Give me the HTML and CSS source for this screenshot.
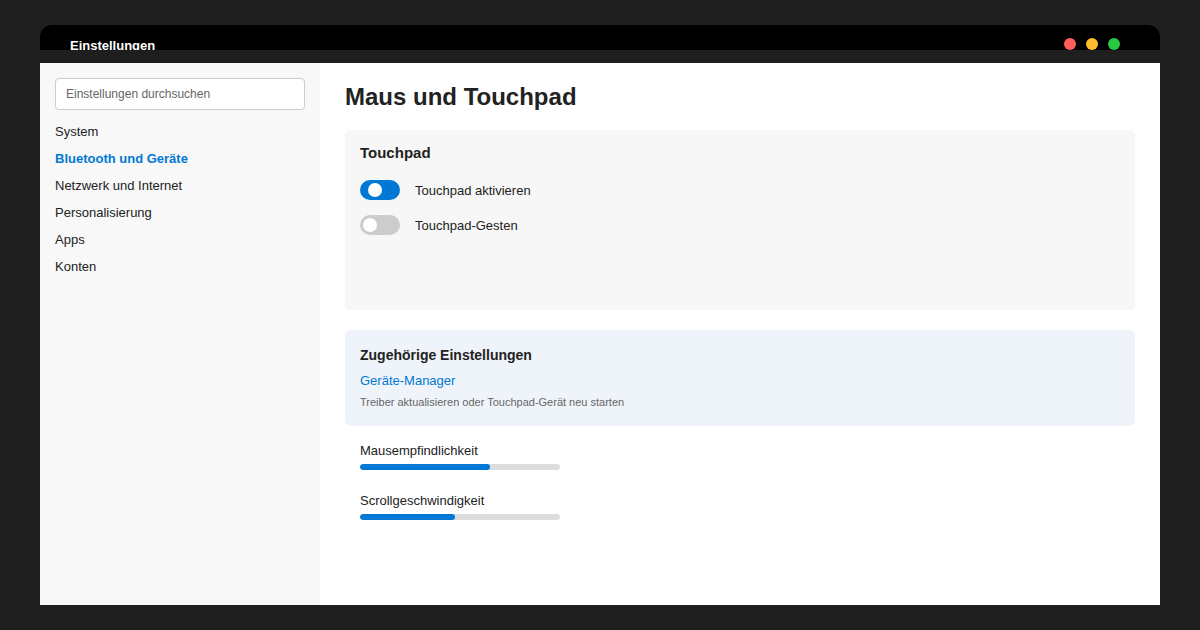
FILE: index.html
```html
<!DOCTYPE html>
<html lang="de">
<head>
    <meta charset="UTF-8">
    <meta name="viewport" content="width=device-width, initial-scale=1.0">
    <title>Einstellungen</title>
    <link rel="stylesheet" href="styles.css">
</head>
<body>
    <div class="window">
        <div class="titlebar">
            <span class="title">Einstellungen</span>
            <div class="dots">
                <span class="dot red"></span>
                <span class="dot yellow"></span>
                <span class="dot green"></span>
            </div>
        </div>

        <div class="body">
            <aside class="sidebar">
                <input class="search" type="text" placeholder="Einstellungen durchsuchen">
                <nav class="nav">
                    <a>System</a>
                    <a class="active">Bluetooth und Geräte</a>
                    <a>Netzwerk und Internet</a>
                    <a>Personalisierung</a>
                    <a>Apps</a>
                    <a>Konten</a>
                </nav>
            </aside>

            <main class="content">
                <h1>Maus und Touchpad</h1>

                <section class="card">
                    <h2>Touchpad</h2>
                    <div class="row">
                        <span class="toggle on"></span>
                        <span>Touchpad aktivieren</span>
                    </div>
                    <div class="row">
                        <span class="toggle"></span>
                        <span>Touchpad-Gesten</span>
                    </div>
                </section>

                <section class="card related">
                    <h3>Zugehörige Einstellungen</h3>
                    <a class="link">Geräte-Manager</a>
                    <p class="hint">Treiber aktualisieren oder Touchpad-Gerät neu starten</p>
                </section>

                <div class="slider">
                    <div class="slider-label">Mausempfindlichkeit</div>
                    <div class="track"><div class="fill" style="width: 65%"></div></div>
                </div>
                <div class="slider">
                    <div class="slider-label">Scrollgeschwindigkeit</div>
                    <div class="track"><div class="fill" style="width: 47.5%"></div></div>
                </div>
            </main>
        </div>
    </div>
</body>
</html>
```

FILE: styles.css
```css
body {
    margin: 0;
    padding: 25px 40px;
    background-color: #1e1e1e;
    font-family: "Liberation Sans", Arial, sans-serif;
    color: #222;
}
.window {
    height: 580px;
    display: flex;
    flex-direction: column;
    background-color: #1e1e1e;
}
.titlebar {
    height: 25px;
    background-color: #000;
    border-radius: 12px 12px 0 0;
    overflow: hidden;
    display: flex;
    justify-content: space-between;
    padding: 0 40px 0 30px;
}
.title {
    color: #fff;
    font-size: 13px;
    font-weight: bold;
    line-height: 16px;
    padding-top: 13px;
}
.dots {
    display: flex;
    gap: 10px;
    padding-top: 13px;
}
.dot {
    width: 12px;
    height: 12px;
    border-radius: 50%;
}
.red { background-color: #ff5f57; }
.yellow { background-color: #febc2e; }
.green { background-color: #28c840; }

.body {
    flex: 1;
    display: flex;
    margin-top: 13px;
}
.sidebar {
    width: 250px;
    padding: 15px;
    background-color: #f8f8f8;
}
.search {
    box-sizing: border-box;
    width: 100%;
    height: 32px;
    padding: 0 10px;
    border: 1px solid #ccc;
    border-radius: 4px;
    font-family: inherit;
    font-size: 12px;
    background-color: #fff;
}
.search::placeholder {
    color: #666;
}
.nav {
    display: flex;
    flex-direction: column;
    margin-top: 8px;
}
.nav a {
    font-size: 13px;
    line-height: 27px;
    color: #222;
}
.nav a.active {
    color: #0078d4;
    font-weight: bold;
}

.content {
    flex: 1;
    padding: 20px 25px;
    background-color: #fff;
}
h1 {
    margin: 0 0 19px;
    font-size: 24px;
    line-height: 28px;
}
.card {
    background-color: #f7f7f7;
    border-radius: 6px;
    padding: 14px 15px 15px;
}
.card:first-of-type {
    min-height: 151px;
}
h2 {
    margin: 0 0 18px;
    font-size: 15px;
    line-height: 18px;
}
.row {
    display: flex;
    align-items: center;
    gap: 15px;
    font-size: 13px;
    margin-bottom: 15px;
}
.toggle {
    position: relative;
    width: 40px;
    height: 20px;
    border-radius: 10px;
    background-color: #ccc;
}
.toggle::after {
    content: "";
    position: absolute;
    top: 3px;
    left: 3px;
    width: 14px;
    height: 14px;
    border-radius: 50%;
    background-color: #fff;
}
.toggle.on {
    background-color: #0078d4;
}
.toggle.on::after {
    left: 8px;
}

.related {
    margin-top: 20px;
    background-color: #eff4fa;
    padding: 17px 15px 17px;
}
h3 {
    margin: 0 0 9px;
    font-size: 14px;
    line-height: 17px;
}
.link {
    display: block;
    font-size: 13px;
    line-height: 16px;
    color: #0078d4;
}
.hint {
    margin: 7px 0 0;
    font-size: 11px;
    line-height: 13px;
    color: #666;
}

.slider {
    padding: 0 15px;
    margin-top: 17px;
}
.slider + .slider {
    margin-top: 23px;
}
.slider-label {
    font-size: 13px;
    line-height: 15px;
}
.track {
    width: 200px;
    height: 6px;
    margin-top: 6px;
    border-radius: 3px;
    background-color: #ddd;
    overflow: hidden;
}
.fill {
    height: 100%;
    border-radius: 3px;
    background-color: #0078d4;
}
```
